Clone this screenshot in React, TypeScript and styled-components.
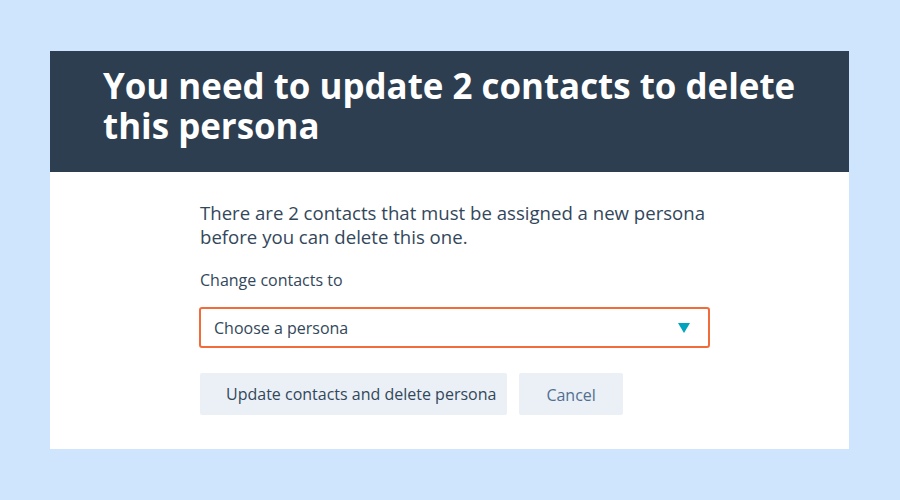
import React from 'react';
import styled, { createGlobalStyle } from 'styled-components';

const GlobalStyle = createGlobalStyle`
    html, body {
        margin: 0;
        padding: 0;
        background: #cfe5fd;
        font-family: 'Open Sans', 'Noto Sans', sans-serif;
    }
`

const Page = styled.div`
    width: 900px;
    height: 500px;
    padding: 51px 0 0 50px;
    box-sizing: border-box;
`
const Dialog = styled.div`
    width: 799px;
    height: 398px;
    background: #ffffff;
    display: flex;
    flex-direction: column;
`
const Header = styled.div`
    background: #2d3e50;
    height: 121px;
    box-sizing: border-box;
    padding: 15px 40px 0 53px;
`
const Title = styled.h1`
    margin: 0;
    color: #ffffff;
    font-size: 34.9px;
    line-height: 40px;
    font-weight: 700;
`
const Body = styled.div`
    padding: 29px 0 0 149px;
    width: 511px;
`
const Message = styled.p`
    margin: 0 0 0 1px;
    color: #33475b;
    font-size: 18.6px;
    line-height: 24px;
`
const Label = styled.label`
    display: block;
    margin: 20px 0 0 1px;
    color: #33475b;
    font-size: 16px;
    line-height: 22px;
`
const Select = styled.div`
    margin-top: 16px;
    height: 41px;
    box-sizing: border-box;
    border: 2px solid #f26b3a;
    border-radius: 3px;
    display: flex;
    align-items: center;
    justify-content: space-between;
    padding: 0 18px 0 13px;
    color: #33475b;
    font-size: 16px;
`
const Caret = styled.span`
    width: 0;
    height: 0;
    border-left: 6px solid transparent;
    border-right: 6px solid transparent;
    border-top: 10px solid #00a4bd;
`
const Actions = styled.div`
    display: flex;
    gap: 12px;
    margin: 25px 0 0 1px;
`
const Button = styled.button<{ $secondary?: boolean }>`
    height: 42px;
    border: none;
    border-radius: 2px;
    background: #eaf0f6;
    font-family: inherit;
    font-size: 16px;
    color: ${p => p.$secondary ? '#516f90' : '#33475b'};
    padding: ${p => p.$secondary ? '2px 27px 0' : '0 11px 0 26px'};
    cursor: pointer;
`

export default function App() {
    return (
        <Page>
            <GlobalStyle />
            <Dialog>
                <Header>
                    <Title>You need to update 2 contacts to delete this persona</Title>
                </Header>
                <Body>
                    <Message>There are 2 contacts that must be assigned a new persona before you can delete this one.</Message>
                    <Label>Change contacts to</Label>
                    <Select>
                        <span>Choose a persona</span>
                        <Caret />
                    </Select>
                    <Actions>
                        <Button>Update contacts and delete persona</Button>
                        <Button $secondary>Cancel</Button>
                    </Actions>
                </Body>
            </Dialog>
        </Page>
    )
}
